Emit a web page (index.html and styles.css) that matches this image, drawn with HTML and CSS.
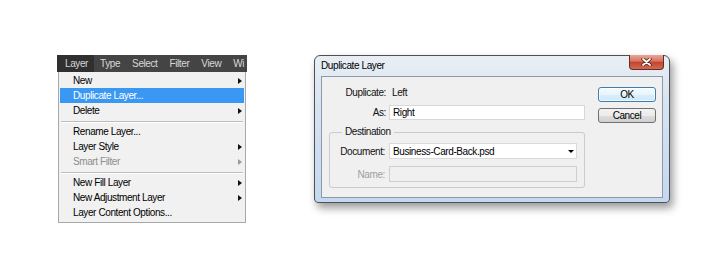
FILE: index.html
```html
<!DOCTYPE html>
<html lang="en">
<head>
  <meta charset="UTF-8" />
  <title>Duplicate Layer</title>
  <link rel="stylesheet" href="styles.css">
</head>
<body>
  <div class="scene">
    <div class="ps-menu">
      <div class="menubar">
        <span class="tab active">Layer</span>
        <span class="tab">Type</span>
        <span class="tab">Select</span>
        <span class="tab">Filter</span>
        <span class="tab">View</span>
        <span class="tab">Wi</span>
      </div>
      <ul class="menu-list">
        <li class="item has-sub">New</li>
        <li class="item selected">Duplicate Layer...</li>
        <li class="item has-sub">Delete</li>
        <li class="sep"></li>
        <li class="item">Rename Layer...</li>
        <li class="item has-sub">Layer Style</li>
        <li class="item has-sub disabled">Smart Filter</li>
        <li class="sep"></li>
        <li class="item has-sub">New Fill Layer</li>
        <li class="item has-sub">New Adjustment Layer</li>
        <li class="item">Layer Content Options...</li>
      </ul>
    </div>

    <div class="dialog">
      <div class="titlebar">
        <span class="title">Duplicate Layer</span>
        <span class="close">
          <svg width="11" height="8" viewBox="0 0 11 8">
            <path d="M2 1 L9 7 M9 1 L2 7" stroke="#5a2018" stroke-width="3.4" stroke-linecap="round" />
            <path d="M2 1 L9 7 M9 1 L2 7" stroke="#fff" stroke-width="1.8" stroke-linecap="round" />
          </svg>
        </span>
      </div>
      <div class="panel">
        <div class="main">
          <div class="row"><label>Duplicate:</label><span class="value">Left</span></div>
          <div class="row gap-top"><label>As:</label><input class="field" value="Right" /></div>
          <fieldset class="dest">
            <legend>Destination</legend>
            <div class="frow"><label>Document:</label>
              <div class="select"><span>Business-Card-Back.psd</span><span class="caret"></span></div>
            </div>
            <div class="frow gap-name"><label class="muted">Name:</label>
              <input class="field wide" disabled />
            </div>
          </fieldset>
        </div>
        <div class="buttons">
          <button class="btn default">OK</button>
          <button class="btn">Cancel</button>
        </div>
      </div>
    </div>
  </div>
</body>
</html>
```

FILE: styles.css
```css
* { box-sizing: border-box; }
body {
  margin: 0;
  background: #fff;
  font-family: 'Liberation Sans', Arial, sans-serif;
  font-size: 10px;
  letter-spacing: -0.4px;
  color: #111;
}
.scene {
  display: flex;
  align-items: flex-start;
  gap: 67px;
  padding: 55px 0 0 57px;
}

/* photoshop menu */
.ps-menu { width: 190px; }
.menubar {
  display: flex;
  height: 17px;
  line-height: 17px;
  background: #444;
  color: #d8d8d8;
  overflow: hidden;
}
.tab { padding: 0 6px; white-space: nowrap; }
.tab.active { padding-left: 8px; background: #303030; }
.menu-list {
  list-style: none;
  margin: 0 0 0 1px;
  padding: 1px 0 2px;
  width: 188px;
  background: #f1f1f1;
  border: 1px solid #a8a8a8;
  border-top: 0;
}
.item {
  display: flex;
  justify-content: space-between;
  align-items: center;
  height: 15px;
  line-height: 15px;
  margin: 0 1px;
  padding: 0 2px 0 13px;
  color: #000;
}
.item.selected { background: #3a98f3; color: #fff; }
.item.disabled { color: #8e8e8e; }
.has-sub::after {
  content: "";
  border-left: 4px solid #111;
  border-top: 3px solid transparent;
  border-bottom: 3px solid transparent;
}
.disabled::after { border-left-color: #9a9a9a; }
.sep {
  margin: 3px 2px 1px;
  border-top: 1px solid #bdbdbd;
  border-bottom: 1px solid #fff;
}

/* windows dialog */
.dialog {
  display: flex;
  flex-direction: column;
  width: 356px;
  height: 148px;
  padding: 0 6px 4px;
  border: 1px solid #4d5157;
  border-radius: 6px 6px 4px 4px;
  background: linear-gradient(#e9eef4, #d6e3f1 35%, #c4d8ef);
  box-shadow: 3px 5px 9px rgba(0,0,0,0.4);
}
.titlebar {
  display: flex;
  justify-content: space-between;
  align-items: flex-start;
  height: 20px;
}
.title { line-height: 20px; color: #000; }
.close {
  display: flex;
  align-items: center;
  justify-content: center;
  width: 35px;
  height: 15px;
  margin: -1px -1px 0 0;
  border: 1px solid #6b2a20;
  border-top: 0;
  border-radius: 0 0 4px 4px;
  background: linear-gradient(#e9a796, #d67360 45%, #c3432f 50%, #d06b50);
}
.panel {
  display: flex;
  gap: 13px;
  height: 122px;
  padding: 8px 6px 0 7px;
  border: 1px solid #8d99a8;
  background: #f0f0f0;
}
.main { width: 256px; }
.row {
  display: flex;
  align-items: center;
  gap: 3px;
  height: 15px;
  color: #111;
}
.row label { width: 57px; text-align: right; }
.value { padding-left: 3px; }
.gap-top { margin-top: 5px; }
.field {
  width: 196px;
  height: 15px;
  padding: 0 3px;
  border: 1px solid #d8d8d8;
  background: #fff;
  font: inherit;
  letter-spacing: inherit;
  color: #000;
  outline: none;
}
.dest {
  width: 256px;
  margin: 6px 0 0;
  padding: 5px 7px 5px 0;
  border: 1px solid #cbcbcb;
  border-radius: 3px;
}
.dest legend {
  margin-left: 12px;
  padding: 0 3px;
  line-height: 12px;
  color: #111;
}
.frow {
  display: flex;
  align-items: center;
  gap: 4px;
  height: 16px;
}
.frow label { width: 55px; text-align: right; }
.gap-name { margin-top: 7px; }
.muted { color: #a0a0a0; }
.select {
  display: flex;
  justify-content: space-between;
  align-items: center;
  width: 188px;
  height: 16px;
  padding: 0 2px 0 3px;
  border: 1px solid #dadada;
  background: #fff;
  color: #000;
}
.caret {
  border-top: 3px solid #000;
  border-left: 3px solid transparent;
  border-right: 3px solid transparent;
}
.field.wide {
  width: 188px;
  height: 16px;
  background: #f0f0f0;
  border-color: #cfcfcf;
}
.buttons {
  display: flex;
  flex-direction: column;
  gap: 6px;
  width: 58px;
  padding-top: 2px;
}
.btn {
  height: 15px;
  padding: 0;
  border: 1px solid #707070;
  border-radius: 3px;
  background: linear-gradient(#f3f3f3, #ebebeb 50%, #dddddd 51%, #d0d0d0);
  font: inherit;
  letter-spacing: inherit;
  line-height: 13px;
  color: #000;
}
.btn.default {
  border-color: #3c7fb1;
  background: linear-gradient(#f5fbfe, #e8f4fb 50%, #d9eefa 51%, #cfe8f7);
  box-shadow: inset 0 0 0 1px rgba(255,255,255,0.7);
}
```
